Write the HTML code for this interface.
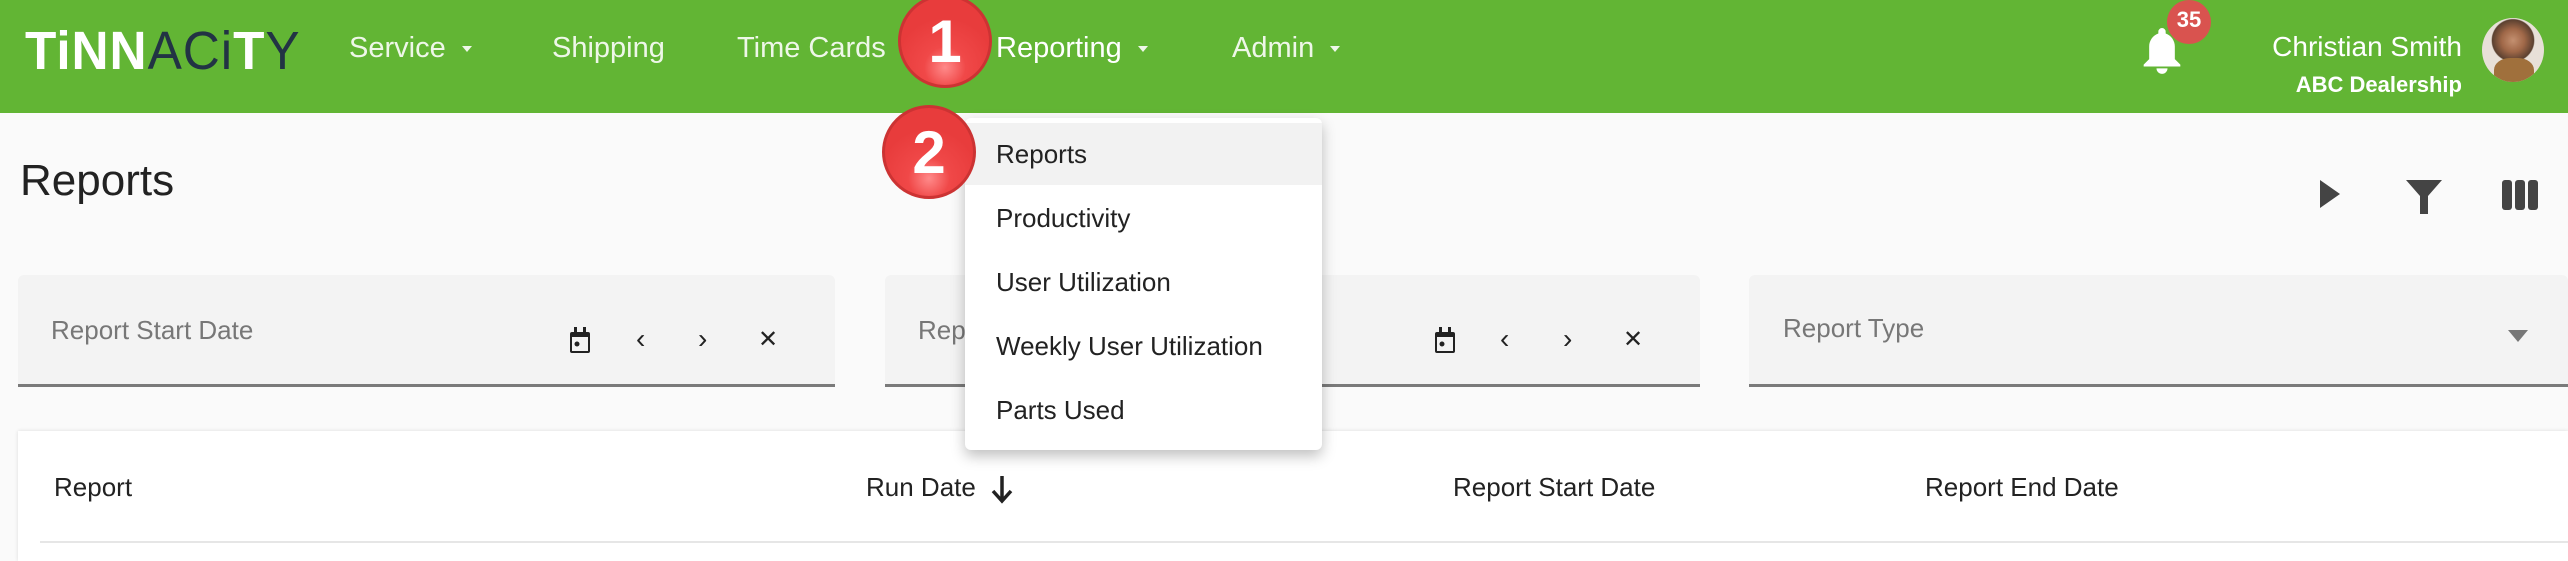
<!DOCTYPE html>
<html><head><meta charset="utf-8"><style>
*{margin:0;padding:0;box-sizing:border-box}
body{width:2568px;height:548px;overflow:hidden;background:#fafafa;font-family:"Liberation Sans",sans-serif;position:relative}
.nav{position:absolute;left:0;top:0;width:2568px;height:113px;background:#62b534}
.a{position:absolute}
.ni{position:absolute;top:32px;color:#eef7e8;font-size:29px}
.car{display:inline-block;width:0;height:0;border-left:5px solid transparent;border-right:5px solid transparent;border-top:6px solid #eef7e8;margin-left:16px;vertical-align:middle}
.badge{position:absolute;border-radius:50%;background:radial-gradient(circle at 50% 80%,#ff8a8a 0,#f04848 25%,#e83c3c 60%);border:3px solid #c33;color:#fff;font-weight:bold;text-align:center}
.field{position:absolute;top:275px;height:112px;background:#f3f3f3;border-bottom:3px solid #7a7a7a;border-radius:6px 6px 0 0}
.lbl{position:absolute;top:40px;left:33px;font-size:26px;color:#777}
.menu{position:absolute;left:965px;top:118px;width:357px;height:332px;background:#fff;border-radius:6px;box-shadow:0 6px 14px rgba(0,0,0,.25)}
.mi{position:absolute;left:31px;font-size:26px;color:#222}
.th{position:absolute;top:472px;font-size:26px;color:#222;font-weight:500}
</style></head><body>
<div class="nav">
 <div class="a" style="left:25px;top:24px;font-size:54px;letter-spacing:1px;line-height:54px;transform:scaleX(0.95);transform-origin:left">
  <span style="color:#fff;font-weight:bold">TiNN</span><span style="color:#234;font-weight:normal">ACi</span><span style="color:#fff;font-weight:bold">T</span><span style="color:#234">Y</span></div>
 <div class="ni" style="left:349px">Service<span class="car"></span></div>
 <div class="ni" style="left:552px">Shipping</div>
 <div class="ni" style="left:737px">Time Cards</div>
 <div class="ni" style="left:996px;color:#fff">Reporting<span class="car"></span></div>
 <div class="ni" style="left:1232px">Admin<span class="car"></span></div>
 <svg class="a" style="left:2140px;top:24px" width="44" height="52" viewBox="0 0 24 28"><path d="M12 2a2 2 0 0 1 2 2v1c3 1 5 4 5 7v7l3 3v1H2v-1l3-3v-7c0-3 2-6 5-7V4a2 2 0 0 1 2-2zM9 24h6a3 3 0 0 1-6 0z" fill="#fff"/></svg>
 <div class="a" style="left:2167px;top:0;width:44px;height:44px;border-radius:50%;background:#d9534f;color:#fff;font-weight:bold;font-size:22px;text-align:center;line-height:40px">35</div>
 <div class="a" style="right:106px;top:31px;color:#fff;font-size:28px;font-weight:500">Christian Smith</div>
 <div class="a" style="right:106px;top:72px;color:#fff;font-size:22px;font-weight:bold">ABC Dealership</div>
 <div class="a" style="left:2482px;top:18px;width:62px;height:64px;border-radius:50%;background:radial-gradient(circle at 50% 35%,#c49070 0,#a06848 22%,#5a4030 40%,#e8e0d8 42%);overflow:hidden"><div style="position:absolute;left:12px;top:40px;width:40px;height:30px;background:#a0703c;border-radius:40% 40% 0 0"></div></div>
</div>
<div class="a" style="left:20px;top:156px;font-size:44px;color:#222">Reports</div>
<svg class="a" style="left:2318px;top:180px" width="24" height="28"><path d="M2 0L22 14L2 28z" fill="#444"/></svg>
<svg class="a" style="left:2406px;top:180px" width="36" height="34"><path d="M0 0H36L22 16V34H14V16z" fill="#444"/></svg>
<svg class="a" style="left:2502px;top:180px" width="36" height="30"><rect x="0" y="0" width="10" height="30" rx="3" fill="#444"/><rect x="13" y="0" width="10" height="30" rx="3" fill="#444"/><rect x="26" y="0" width="10" height="30" rx="3" fill="#444"/></svg>

<div class="field" style="left:18px;width:817px"><div class="lbl">Report Start Date</div>
 <svg class="a" style="left:550px;top:52px" width="26" height="28"><rect x="2" y="5" width="20" height="21" rx="2" fill="#222"/><rect x="4" y="10" width="16" height="14" fill="#f3f3f3"/><rect x="6" y="0" width="3" height="7" fill="#222"/><rect x="15" y="0" width="3" height="7" fill="#222"/><circle cx="9" cy="17" r="2.5" fill="#222"/></svg>
 <div class="a" style="left:618px;top:48px;font-size:28px;color:#222">‹</div>
 <div class="a" style="left:680px;top:48px;font-size:28px;color:#222">›</div>
 <div class="a" style="left:740px;top:50px;font-size:24px;color:#222">✕</div>
</div>
<div class="field" style="left:885px;width:815px"><div class="lbl">Report End Date</div>
 <svg class="a" style="left:548px;top:52px" width="26" height="28"><rect x="2" y="5" width="20" height="21" rx="2" fill="#222"/><rect x="4" y="10" width="16" height="14" fill="#f3f3f3"/><rect x="6" y="0" width="3" height="7" fill="#222"/><rect x="15" y="0" width="3" height="7" fill="#222"/><circle cx="9" cy="17" r="2.5" fill="#222"/></svg>
 <div class="a" style="left:615px;top:48px;font-size:28px;color:#222">‹</div>
 <div class="a" style="left:678px;top:48px;font-size:28px;color:#222">›</div>
 <div class="a" style="left:738px;top:50px;font-size:24px;color:#222">✕</div>
</div>
<div class="field" style="left:1749px;width:819px"><div class="lbl" style="left:34px;top:38px">Report Type</div>
 <div class="a" style="left:759px;top:55px;border-left:10px solid transparent;border-right:10px solid transparent;border-top:12px solid #777"></div></div>

<div class="a" style="left:18px;top:431px;width:2550px;height:130px;background:#fff;box-shadow:0 0 4px rgba(0,0,0,.12)"></div>
<div class="a" style="left:40px;top:541px;width:2528px;height:2px;background:#e6e6e6"></div>
<div class="th" style="left:54px">Report</div>
<div class="th" style="left:866px">Run Date</div>
<svg class="a" style="left:990px;top:474px" width="24" height="30"><path d="M12 2V26M3 17L12 27L21 17" stroke="#222" stroke-width="3.5" fill="none"/></svg>
<div class="th" style="left:1453px">Report Start Date</div>
<div class="th" style="left:1925px">Report End Date</div>

<div class="menu">
 <div class="a" style="left:0;top:5px;width:357px;height:62px;background:#f2f2f2"></div>
 <div class="mi" style="top:21px">Reports</div>
 <div class="mi" style="top:85px">Productivity</div>
 <div class="mi" style="top:149px">User Utilization</div>
 <div class="mi" style="top:213px">Weekly User Utilization</div>
 <div class="mi" style="top:277px">Parts Used</div>
</div>
<div class="badge" style="left:898px;top:-6px;width:94px;height:94px;font-size:60px;line-height:90px">1</div>
<div class="badge" style="left:882px;top:105px;width:94px;height:94px;font-size:60px;line-height:90px">2</div>
</body></html>
